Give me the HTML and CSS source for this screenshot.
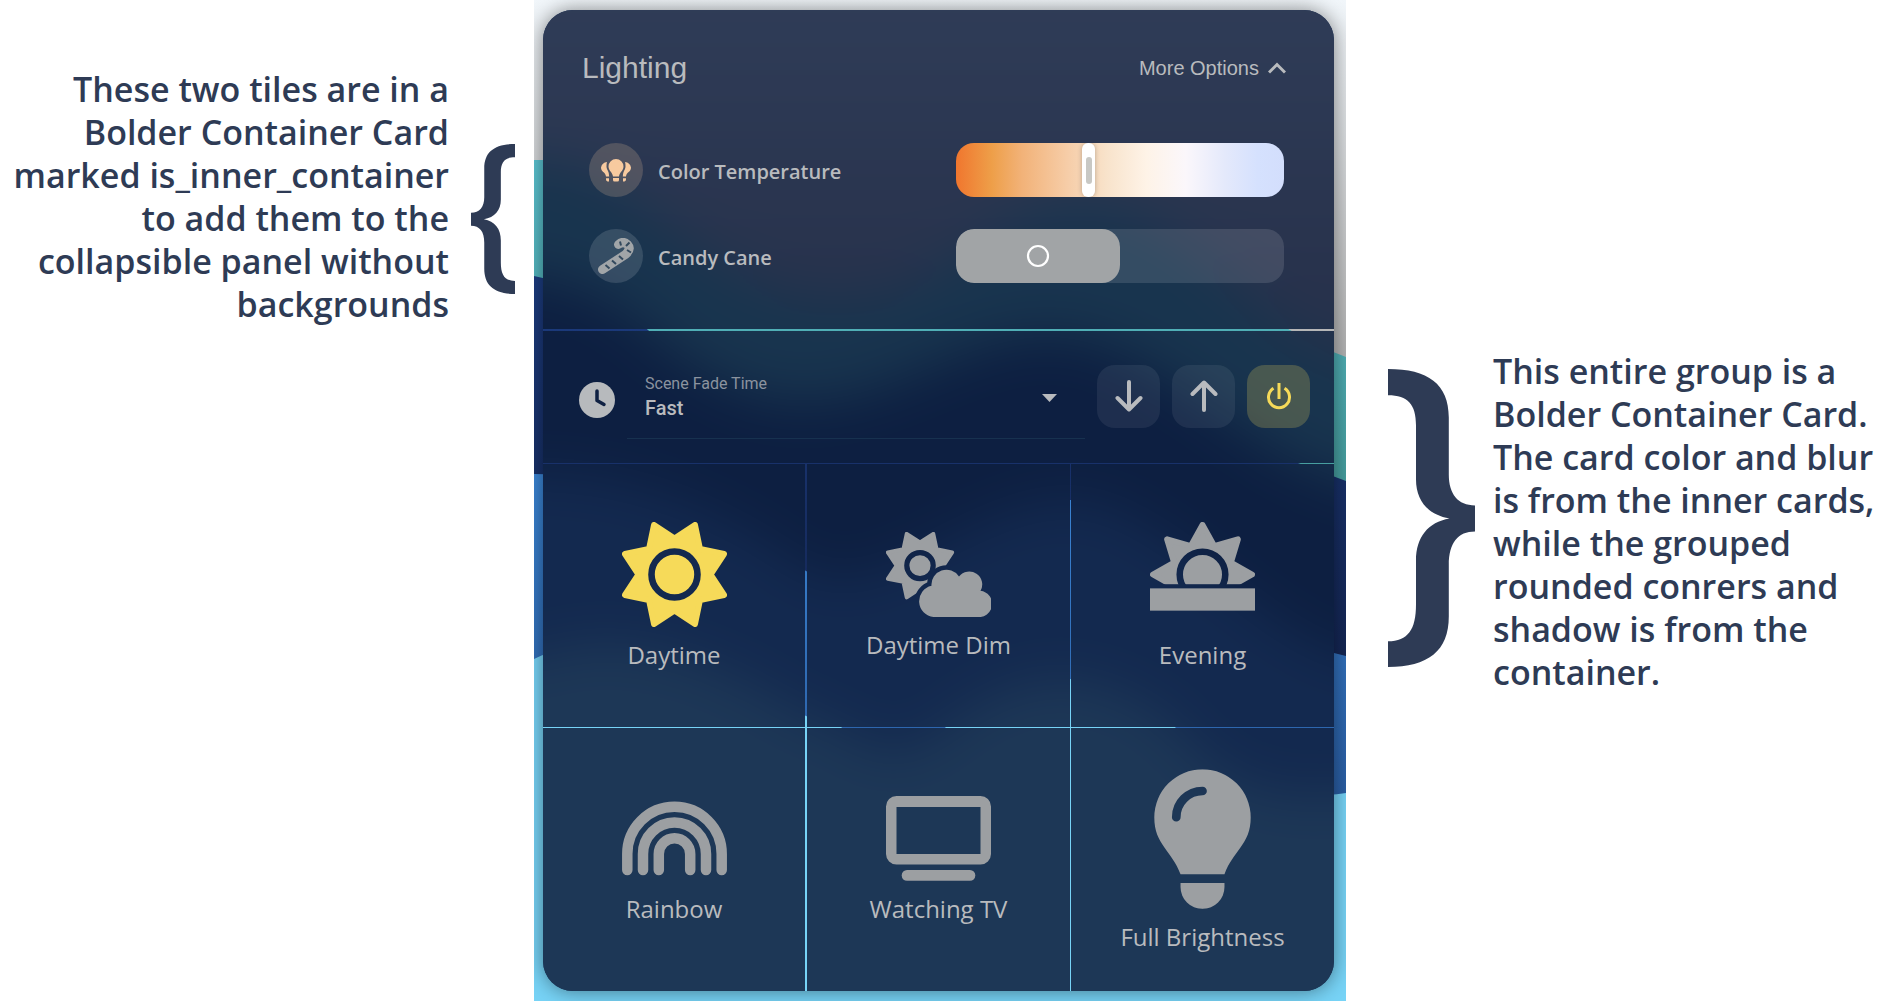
FILE: index.html
```html
<!DOCTYPE html>
<html lang="en">
<head>
<meta charset="utf-8">
<title>Lighting</title>
<link rel="stylesheet" href="styles.css">
</head>
<body>
<main class="page">
  <aside class="note note-left">
    <p class="note-text">These two tiles are in a<br>Bolder Container Card<br>marked is_inner_container<br>to add them to the<br>collapsible panel without<br>backgrounds</p>
    <svg class="bracket bracket-small" viewBox="0 0 87 319" preserveAspectRatio="none" aria-hidden="true"><path id="bracket" transform="matrix(-1 0 0 1 87 0)" d="M0 0C40 0 60.800 16 60.800 52V113C60.800 134 70 146 87 146V174C70 174 60.800 186 60.800 210V265C60.800 302 40 319 0 319V291.500C20 291 28 279 28 252V205C28 180 40 164 61.500 160C40 156 28 141 28 118V60C28 38 20 28 0 28Z"/></svg>
  </aside>

  <section class="stage">
    <svg class="wallpaper" viewBox="0 0 812 1001" preserveAspectRatio="none" aria-hidden="true">
      <defs>
        <linearGradient id="mist" x1="0" y1="0" x2="0" y2="374" gradientUnits="userSpaceOnUse"><stop offset="0" stop-color="#f1f6fa"/><stop offset="1" stop-color="#aeaeae"/></linearGradient>
        <linearGradient id="teal" x1="0" y1="160" x2="0" y2="500" gradientUnits="userSpaceOnUse"><stop offset="0" stop-color="#5cc4d2"/><stop offset="1" stop-color="#449a9a"/></linearGradient>
        <linearGradient id="navy" x1="0" y1="276" x2="0" y2="654" gradientUnits="userSpaceOnUse"><stop offset="0" stop-color="#1c3c80"/><stop offset="1" stop-color="#142654"/></linearGradient>
        <linearGradient id="blue" x1="0" y1="474" x2="0" y2="793" gradientUnits="userSpaceOnUse"><stop offset="0" stop-color="#3b86d6"/><stop offset="1" stop-color="#2a5ea4"/></linearGradient>
      </defs>
      <rect width="812" height="1001" fill="url(#mist)"/>
      <path fill="url(#teal)" d="M0 160H10C110 170 170 300 300 300S450 205 546 205C640 205 700 300 756 330Q785 347 812 357V1001H0Z"/>
      <path fill="url(#navy)" d="M0 276Q70 290 114 330C170 380 220 402 270 402C360 402 430 335 516 335C600 335 700 430 764 463L812 481V1001H0Z"/>
      <path fill="url(#blue)" d="M0 474C120 474 220 530 272 571C340 610 440 500 536 500C620 500 720 625 800 653L812 656V1001H0Z"/>
      <path fill="#77d3f6" d="M0 659C60 630 150 640 272 716Q286 722 307 727C350 765 380 755 412 727Q470 679 536 679Q600 690 641 727C700 800 760 800 812 793V1001H0Z"/>
    </svg>

    <div class="card">
      <section class="glass panel">
        <header class="panel-head">
          <h1 class="panel-title">Lighting</h1>
          <button class="more" type="button">More Options
            <svg width="18" height="12" viewBox="0 0 18 12" aria-hidden="true"><path d="M1 10.500L9 2.500L17 10.500" fill="none" stroke="currentColor" stroke-width="3"/></svg>
          </button>
        </header>

        <div class="row">
          <span class="bubble bubble-warm">
            <svg width="30" height="23" viewBox="0 0 30 23" aria-hidden="true" fill="currentColor"><path d="M15 0a7.500 7.500 0 0 1 7.500 7.500c0 4.500-4 5.500-4.500 10h-6c-.5-4.500-4.500-5.500-4.500-10A7.500 7.500 0 0 1 15 0ZM12 19h6v2q0 1.500-1.500 1.500h-3Q12 22.500 12 21ZM6 3Q4.500 8 7 12Q8.200 14 8.200 17.500H5C4.500 13 0 13 0 8.500Q1 3.500 6 3ZM24 3q1.500 5-1 9q-1.200 2-1.200 5.500H25c.5-4.500 5-4.500 5-9Q29 3.500 24 3ZM5 19.200h3v3.300H6.500Q5 22 5 20.500ZM25 19.200h-3v3.300h1.500Q25 22 25 20.500Z"/></svg>
          </span>
          <label class="row-name" for="temp">Color Temperature</label>
          <input class="temp" id="temp" type="range" min="0" max="100" value="40">
        </div>

        <div class="row">
          <span class="bubble">
            <svg width="36" height="36" viewBox="0 0 36 36" aria-hidden="true" fill="none"><path d="M4.500 31.500L27.500 16.500Q33.500 11 29.500 6.500Q25 2.500 20.500 6.500" stroke="currentColor" stroke-width="9" stroke-linecap="round"/><path d="M7.500 27l4 3.500M14 22.500l4 3.500M21 18l4 3.500M29 12l4 2.500M28 8l3.500-3.500M22 3.500l1 4" stroke="#33495d" stroke-width="2"/></svg>
          </span>
          <label class="row-name" for="cane">Candy Cane</label>
          <input class="switch" id="cane" type="checkbox" role="switch">
        </div>
      </section>

      <section class="glass fade">
        <svg class="clock" width="36" height="36" viewBox="0 0 36 36" aria-hidden="true"><circle cx="18" cy="18" r="18" fill="#b7babd"/><path d="M18 9v9.500l7 4" fill="none" stroke="#0f2143" stroke-width="3.500" stroke-linecap="round" stroke-linejoin="round"/></svg>
        <div class="field">
          <label class="field-label" for="fade">Scene Fade Time</label>
          <select class="field-select" id="fade"><option>Fast</option><option>Slow</option></select>
        </div>
        <div class="actions">
          <button class="action" type="button" aria-label="Dim"><svg width="28" height="32" viewBox="0 0 28 32"><path d="M14 2v27M2.500 18L14 29.500L25.500 18"/></svg></button>
          <button class="action" type="button" aria-label="Brighten"><svg width="28" height="32" viewBox="0 0 28 32"><path d="M14 30V3M2.500 14L14 2.500L25.500 14"/></svg></button>
          <button class="action action-on" type="button" aria-label="Power"><svg width="26" height="28" viewBox="0 0 26 28"><path d="M13 1v16M7.500 6.300a10.500 10.500 0 1 0 11 0"/></svg></button>
        </div>
      </section>

      <div class="scenes">
        <button class="glass scene" type="button">
          <svg class="on" width="105" height="105" viewBox="-52.500 -52.500 105 105" aria-hidden="true">
            <mask id="sun-ring"><rect x="-60" y="-60" width="120" height="120" fill="#fff"/><circle r="23" fill="none" stroke="#000" stroke-width="6.600"/></mask>
            <path mask="url(#sun-ring)" fill="currentColor" stroke="currentColor" stroke-width="6" stroke-linejoin="round" d="M0-36L20.500-49.500L25.500-25.500L49.500-20.500L36 0L49.500 20.500L25.500 25.500L20.500 49.500L0 36L-20.500 49.500L-25.500 25.500L-49.500 20.500L-36 0L-49.500-20.500L-25.500-25.500L-20.500-49.500Z"/>
          </svg>
          <span>Daytime</span>
        </button>
        <button class="glass scene" type="button">
          <svg width="105" height="85" viewBox="0 0 105 86" preserveAspectRatio="none" aria-hidden="true">
            <defs><path id="cloud" d="M47.500 86a16 16 0 0 1-2-31.500A15 15 0 0 1 73 45A13 13 0 0 1 94.500 59.500A13.300 13.300 0 0 1 91 86Z"/></defs>
            <mask id="cloud-gap"><rect width="105" height="86" fill="#fff"/><circle cx="34" cy="34" r="13.200" fill="none" stroke="#000" stroke-width="5.200"/><use href="#cloud" fill="#000" stroke="#000" stroke-width="9"/></mask>
            <g mask="url(#cloud-gap)"><path transform="translate(34 34) scale(.65)" fill="currentColor" stroke="currentColor" stroke-width="6" stroke-linejoin="round" d="M0-36L20.500-49.500L25.500-25.500L49.500-20.500L36 0L49.500 20.500L25.500 25.500L20.500 49.500L0 36L-20.500 49.500L-25.500 25.500L-49.500 20.500L-36 0L-49.500-20.500L-25.500-25.500L-20.500-49.500Z"/></g>
            <use href="#cloud" fill="currentColor"/>
          </svg>
          <span>Daytime Dim</span>
        </button>
        <button class="glass scene" type="button">
          <svg width="105" height="105" viewBox="-53 -53 106 106" aria-hidden="true">
            <mask id="dusk"><rect x="-60" y="-60" width="120" height="69.800" fill="#fff"/><circle r="23" fill="none" stroke="#000" stroke-width="6.600"/></mask>
            <path mask="url(#dusk)" fill="currentColor" stroke="currentColor" stroke-width="6" stroke-linejoin="round" d="M0-50L11.900-28.600L35.700-35.500L28.600-11.900L50 0L28.600 11.900L35.700 35.500H-35.700L-28.600 11.900L-50 0L-28.600-11.900L-35.700-35.500L-11.900-28.600Z"/>
            <rect x="-53" y="14" width="106" height="22.500" fill="currentColor"/>
          </svg>
          <span>Evening</span>
        </button>
        <button class="glass scene" type="button">
          <svg width="105" height="85" viewBox="-52.500 0 105 85" aria-hidden="true" fill="none" stroke="currentColor" stroke-width="10.500" stroke-linecap="round"><path d="M-47.200 74V58a47.200 47.200 0 0 1 94.400 0V74M-31.500 74V58a31.500 31.500 0 0 1 63 0V74M-15.700 74V58a15.700 15.700 0 0 1 31.400 0V74"/></svg>
          <span>Rainbow</span>
        </button>
        <button class="glass scene" type="button">
          <svg width="105" height="85" viewBox="0 0 105 85" aria-hidden="true" fill="currentColor"><path fill-rule="evenodd" d="M10.500 0h84a10.500 10.500 0 0 1 10.500 10.500v47.500a10.500 10.500 0 0 1-10.500 10.500h-84A10.500 10.500 0 0 1 0 58V10.500A10.500 10.500 0 0 1 10.500 0ZM10.500 11v47h84V11Z"/><rect x="15.700" y="74" width="73.600" height="10.700" rx="5.300"/></svg>
          <span>Watching TV</span>
        </button>
        <button class="glass scene" type="button">
          <svg width="97" height="140" viewBox="-49 0 98 141" aria-hidden="true">
            <mask id="glint"><rect x="-49" width="98" height="141" fill="#fff"/><path d="M-26.500 48.500A26.500 26.500 0 0 1 0 22" fill="none" stroke="#000" stroke-width="8.800" stroke-linecap="round"/></mask>
            <path mask="url(#glint)" fill="currentColor" d="M-22.200 106C-31 82-48.700 76-48.700 48.700a48.700 48.700 0 0 1 97.400 0C48.700 76 31 82 22.200 106ZM-22.200 115H22.200V119a22.200 22.200 0 0 1-44.400 0Z"/>
          </svg>
          <span>Full Brightness</span>
        </button>
      </div>
    </div>
  </section>

  <aside class="note note-right">
    <svg class="bracket bracket-large" viewBox="0 0 87 319" preserveAspectRatio="none" aria-hidden="true"><use href="#bracket" transform="matrix(-1 0 0 1 87 0)"/></svg>
    <p class="note-text">This entire group is a<br>Bolder Container Card.<br>The card color and blur<br>is from the inner cards,<br>while the grouped<br>rounded conrers and<br>shadow is from the<br>container.</p>
  </aside>
</main>
</body>
</html>
```
FILE: styles.css
```css
* { box-sizing: border-box; }

body {
  margin: 0;
  background: #fff;
  font-family: "Open Sans", "Noto Sans", sans-serif;
  color: #b9bbbe;
}

button {
  border: 0;
  padding: 0;
  background: none;
  color: inherit;
  font: inherit;
  cursor: pointer;
}

svg { display: block; flex: none; }

.page {
  display: grid;
  grid-template-columns: minmax(0, 534fr) minmax(0, 812fr) minmax(0, 552fr);
  min-height: 100vh;
}

/* Annotations beside the card */
.note {
  display: flex;
  align-items: flex-start;
  color: #2e3b55;
}
.note-left { justify-content: flex-end; padding: 68px 19px 0 0; gap: 22px; }
.note-right { padding: 350px 0 0 42px; gap: 18px; }
.note-text {
  margin: 0;
  font-size: 34px;
  font-weight: 600;
  line-height: 43px;
  white-space: nowrap;
}
.note-left .note-text { text-align: right; }
.bracket { fill: currentColor; }
.bracket-small { width: 44px; height: 150px; margin-top: 76px; }
.bracket-large { width: 87px; height: 298px; margin-top: 19px; }

/* Wallpaper and container card */
.stage {
  position: relative;
  display: flex;
  padding: 10px 12px 10px 9px;
  overflow: hidden;
}
.wallpaper {
  position: absolute;
  inset: 0;
  width: 100%;
  height: 100%;
}
.card {
  position: relative;
  flex: 1;
  display: flex;
  flex-direction: column;
  border-radius: 30px;
  box-shadow: 0 0 20px rgba(0, 0, 0, .45);
  overflow: hidden;
}

/* Frosted copy of the wallpaper, pinned to the viewport so all cards share it */
.glass {
  background: #12294e url("data:image/svg+xml,%3Csvg xmlns='http://www.w3.org/2000/svg' viewBox='0 0 812 1001' preserveAspectRatio='none'%3E%3Cdefs%3E%3ClinearGradient id='m' x1='0' y1='0' x2='0' y2='340' gradientUnits='userSpaceOnUse'%3E%3Cstop stop-color='%232f3c57'/%3E%3Cstop offset='1' stop-color='%2326304a'/%3E%3C/linearGradient%3E%3Cfilter id='b' filterUnits='userSpaceOnUse' x='-150' y='-150' width='1112' height='1300' color-interpolation-filters='sRGB'%3E%3CfeGaussianBlur stdDeviation='26'/%3E%3C/filter%3E%3C/defs%3E%3Cg filter='url(%23b)'%3E%3Cpath fill='url(%23m)' d='M-150-150H962V1150H-150Z'/%3E%3Cpath fill='%2318344e' d='M-150 160H10C110 170 170 300 300 300S450 205 546 205C640 205 700 300 756 330Q785 347 812 357L962 400V1150H-150Z'/%3E%3Cpath fill='%230d1f41' d='M-150 276H0Q70 290 114 330C170 380 220 402 270 402C360 402 430 335 516 335C600 335 700 430 764 463L812 481L962 530V1150H-150Z'/%3E%3Cpath fill='%2313294f' d='M-150 474H0C120 474 220 530 272 571C340 610 440 500 536 500C620 500 720 625 800 653L962 690V1150H-150Z'/%3E%3Cpath fill='%231d3756' d='M-150 659H0C60 630 150 640 272 716Q286 722 307 727C350 765 380 755 412 727Q470 679 536 679Q600 690 641 727C700 800 760 800 812 793H962V1150H-150Z'/%3E%3C/g%3E%3C/svg%3E") 28.135vw 0 / 42.782vw 100vh no-repeat fixed;
}

/* Expanded panel */
.panel {
  display: flex;
  flex-direction: column;
  gap: 32px;
  margin-bottom: 2px;
  padding: 38px 50px 46px 46px;
}
.panel-head {
  display: flex;
  justify-content: space-between;
  align-items: center;
  height: 40px;
  margin: 0 -2px 23px -7px;
  font-family: "Liberation Sans", Arial, sans-serif;
}
.panel-title { margin: 0; font-size: 30px; font-weight: 400; }
.more { display: flex; align-items: center; gap: 9px; font-size: 20px; }

.row { display: flex; align-items: center; gap: 15px; }
.row-name { flex: 1; padding-top: 2px; font-size: 20px; font-weight: 600; }
.bubble {
  display: grid;
  place-items: center;
  width: 54px;
  height: 54px;
  border-radius: 50%;
  background: rgba(255, 255, 255, .13);
  color: #a1a5a8;
}
.bubble-warm { background: rgba(247, 202, 159, .2); color: #f7ca9f; }

.temp,
.switch {
  appearance: none;
  width: 328px;
  height: 54px;
  margin: 0;
  border-radius: 18px;
  overflow: hidden;
}
.temp {
  background: linear-gradient(90deg, #f0762e, #ee9f49 11%, #f2b278 20%, #f6cda8 34%, #f8e3cb 46%, #fef3e7 58%, #fbf7fb 70%, #e4e9fb 82%, #d5e1fe 92%, #d3defc);
}
.temp::-webkit-slider-thumb {
  appearance: none;
  width: 13px;
  height: 54px;
  border-radius: 6px;
  background: #fff url("data:image/svg+xml,%3Csvg xmlns='http://www.w3.org/2000/svg' width='6' height='27'%3E%3Crect width='6' height='27' rx='3' fill='%23c8c8c4'/%3E%3C/svg%3E") center no-repeat;
  box-shadow: 0 0 5px rgba(0, 0, 0, .25);
}
.switch { background: rgba(255, 255, 255, .12); }
.switch::before {
  content: "";
  display: block;
  width: 50%;
  height: 100%;
  border-radius: 18px;
  background: #a1a4a6 url("data:image/svg+xml,%3Csvg xmlns='http://www.w3.org/2000/svg' width='24' height='24'%3E%3Ccircle cx='12' cy='12' r='10' fill='none' stroke='white' stroke-width='2.2'/%3E%3C/svg%3E") center no-repeat;
}

/* Fade time and actions */
.fade {
  display: flex;
  align-items: center;
  margin-bottom: 1px;
  padding: 24px 24px 24px 36px;
}
.clock { margin-top: 6px; }
.field {
  flex: 1;
  display: flex;
  flex-direction: column;
  height: 84px;
  margin: 0 12px;
  padding: 18px 0 0;
  border-bottom: 1px solid #17314f;
  font-family: Roboto, sans-serif;
}
.field-label { padding-left: 18px; font-size: 16px; line-height: 21px; color: #8b939f; }
.field-select {
  appearance: none;
  height: 27px;
  border: 0;
  padding: 1px 0 0 18px;
  background: url("data:image/svg+xml,%3Csvg xmlns='http://www.w3.org/2000/svg' width='15' height='8'%3E%3Cpath d='M0 0h15l-7.500 8z' fill='%23b9bbbe'/%3E%3C/svg%3E") right 28px top 0 no-repeat;
  color: inherit;
  font: 500 20px/26px Roboto, sans-serif;
}
.actions { display: flex; gap: 12px; margin-bottom: 2px; }
.action {
  display: grid;
  place-items: center;
  width: 63px;
  height: 63px;
  border-radius: 18px;
  background: rgba(255, 255, 255, .07);
}
.action path {
  fill: none;
  stroke: currentColor;
  stroke-width: 4;
  stroke-linecap: round;
  stroke-linejoin: round;
}
.action-on { background: rgba(246, 218, 89, .22); color: #f6da59; }
.action-on path { stroke-width: 3; stroke-linecap: butt; }

/* Scene tiles */
.scenes {
  flex: 1;
  display: grid;
  grid-template-columns: repeat(3, minmax(0, 1fr));
  grid-template-rows: repeat(2, minmax(263px, 1fr));
  gap: 1px;
}
.scene {
  display: flex;
  flex-direction: column;
  align-items: center;
  justify-content: center;
  gap: 14px;
  font-size: 24px;
  line-height: 28px;
}
.scene:nth-child(3n + 1) { margin-right: 1px; }
.scene svg { color: #9c9fa2; }
.scene svg.on { color: #f6da59; }
```
